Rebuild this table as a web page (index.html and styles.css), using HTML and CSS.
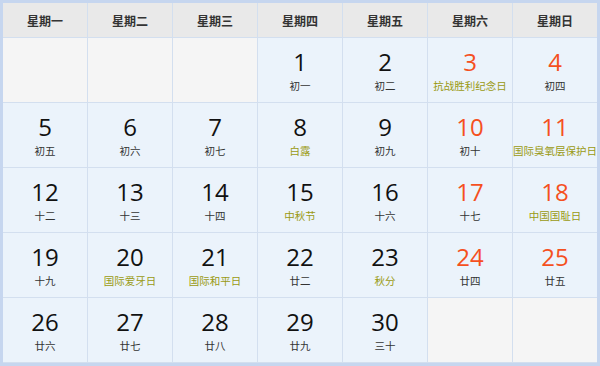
FILE: index.html
```html
<!DOCTYPE html>
<html lang="zh">
<head>
<meta charset="utf-8">
<link rel="stylesheet" href="styles.css">
</head>
<body>
<div class="cal">
  <div class="hd">星期一</div>
  <div class="hd">星期二</div>
  <div class="hd">星期三</div>
  <div class="hd">星期四</div>
  <div class="hd">星期五</div>
  <div class="hd">星期六</div>
  <div class="hd">星期日</div>

  <div class="cell empty"></div>
  <div class="cell empty"></div>
  <div class="cell empty"></div>
  <div class="cell"><span class="num">1</span><span class="lu">初一</span></div>
  <div class="cell"><span class="num">2</span><span class="lu">初二</span></div>
  <div class="cell we"><span class="num">3</span><span class="lu fest">抗战胜利纪念日</span></div>
  <div class="cell we"><span class="num">4</span><span class="lu">初四</span></div>

  <div class="cell"><span class="num">5</span><span class="lu">初五</span></div>
  <div class="cell"><span class="num">6</span><span class="lu">初六</span></div>
  <div class="cell"><span class="num">7</span><span class="lu">初七</span></div>
  <div class="cell"><span class="num">8</span><span class="lu fest">白露</span></div>
  <div class="cell"><span class="num">9</span><span class="lu">初九</span></div>
  <div class="cell we"><span class="num">10</span><span class="lu">初十</span></div>
  <div class="cell we"><span class="num">11</span><span class="lu fest">国际臭氧层保护日</span></div>

  <div class="cell"><span class="num">12</span><span class="lu">十二</span></div>
  <div class="cell"><span class="num">13</span><span class="lu">十三</span></div>
  <div class="cell"><span class="num">14</span><span class="lu">十四</span></div>
  <div class="cell"><span class="num">15</span><span class="lu fest">中秋节</span></div>
  <div class="cell"><span class="num">16</span><span class="lu">十六</span></div>
  <div class="cell we"><span class="num">17</span><span class="lu">十七</span></div>
  <div class="cell we"><span class="num">18</span><span class="lu fest">中国国耻日</span></div>

  <div class="cell"><span class="num">19</span><span class="lu">十九</span></div>
  <div class="cell"><span class="num">20</span><span class="lu fest">国际爱牙日</span></div>
  <div class="cell"><span class="num">21</span><span class="lu fest">国际和平日</span></div>
  <div class="cell"><span class="num">22</span><span class="lu">廿二</span></div>
  <div class="cell"><span class="num">23</span><span class="lu fest">秋分</span></div>
  <div class="cell we"><span class="num">24</span><span class="lu">廿四</span></div>
  <div class="cell we"><span class="num">25</span><span class="lu">廿五</span></div>

  <div class="cell"><span class="num">26</span><span class="lu">廿六</span></div>
  <div class="cell"><span class="num">27</span><span class="lu">廿七</span></div>
  <div class="cell"><span class="num">28</span><span class="lu">廿八</span></div>
  <div class="cell"><span class="num">29</span><span class="lu">廿九</span></div>
  <div class="cell"><span class="num">30</span><span class="lu">三十</span></div>
  <div class="cell empty"></div>
  <div class="cell empty"></div>
</div>
</body>
</html>
```
FILE: styles.css
```css
html, body {
  margin: 0;
  padding: 0;
  background: #ffffff;
}
.cal {
  box-sizing: border-box;
  width: 600px;
  height: 366px;
  border: 3px solid #c6d6ef;
  background: #d3dfef;
  display: grid;
  grid-template-columns: repeat(7, 1fr);
  grid-template-rows: 34px repeat(5, 64px);
  gap: 1px;
  font-family: "Noto Sans CJK SC", "DejaVu Sans", sans-serif;
}
.hd {
  background: #e9e9e9;
  display: flex;
  align-items: center;
  justify-content: center;
  font-size: 12px;
  font-weight: bold;
  color: #333333;
}
.cell {
  background: #ebf3fb;
  display: flex;
  flex-direction: column;
  align-items: center;
  padding-top: 7px;
  box-sizing: border-box;
}
.cell.empty {
  background: #f5f5f5;
}
.num {
  font-family: "Open Sans", sans-serif;
  font-size: 24px;
  line-height: 33px;
  color: #111111;
}
.lu {
  font-size: 10.5px;
  line-height: 16px;
  color: #333333;
  white-space: nowrap;
}
.we .num {
  color: #f5501e;
}
.lu.fest {
  color: #9a9a12;
}
```
